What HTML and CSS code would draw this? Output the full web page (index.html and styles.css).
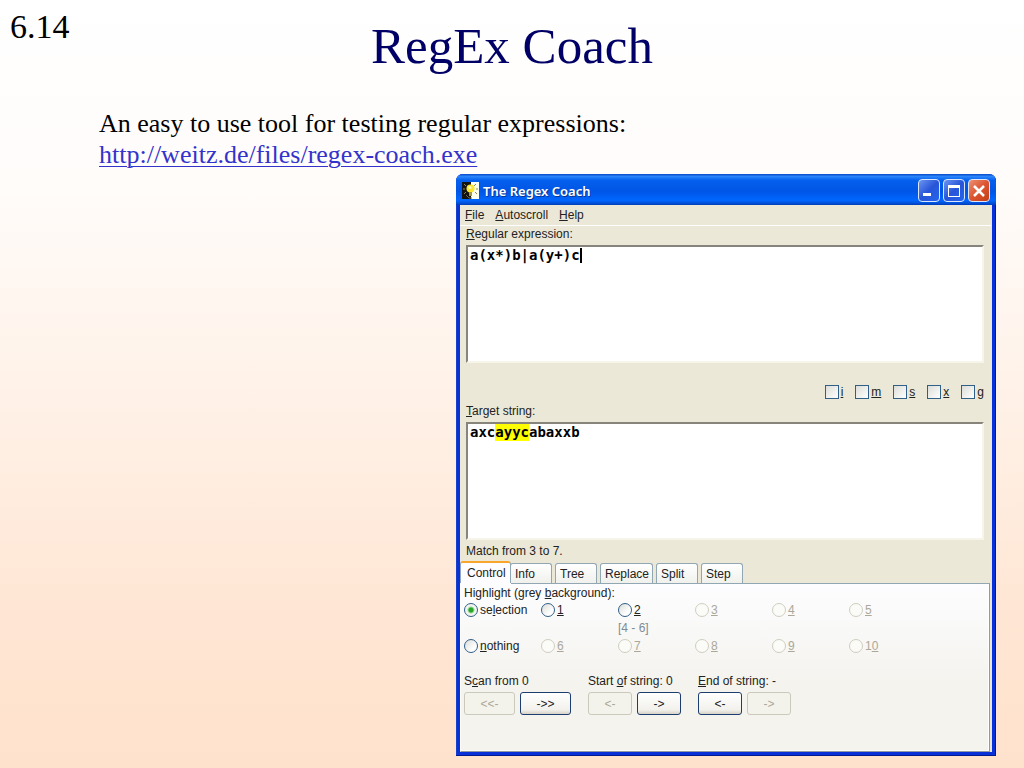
FILE: index.html
```html
<!DOCTYPE html>
<html lang="en">
<head>
<meta charset="utf-8">
<title>RegEx Coach</title>
<link rel="stylesheet" href="styles.css">
</head>
<body>
<main class="slide">
  <header class="slide-header">
    <span class="slide-number">6.14</span>
    <h1 class="slide-title">RegEx Coach</h1>
  </header>
  <div class="slide-text">
    <p>An easy to use tool for testing regular expressions:</p>
    <p><a href="http://weitz.de/files/regex-coach.exe">http://weitz.de/files/regex-coach.exe</a></p>
  </div>
  <section class="window" aria-label="The Regex Coach">
    <div class="titlebar">
      <svg class="app-icon" viewBox="0 0 17 17" aria-hidden="true">
        <rect width="9" height="17" fill="#141414"/><rect x="9" width="8" height="17" fill="#fffff0"/>
        <path d="M2 2l2 2M1 7h2M2 12l2-2M14 2l-2 2M16 7h-2M15 12l-2-2" stroke="#8c8a50" stroke-width="1"/>
        <circle cx="8.500" cy="6.500" r="4" fill="#ffe62e"/><circle cx="8" cy="5.500" r="1.500" fill="#fffbc0"/>
        <path d="M7 10h3v4H7z" fill="#a89848"/><path d="M4 13l3 3h3" stroke="#69694a" fill="none"/>
      </svg>
      <h2 class="window-title">The Regex Coach</h2>
      <button class="caption-button" aria-label="Minimize"><svg viewBox="0 0 20 21"><path d="M4 13h8v3H4z" fill="#fff"/></svg></button>
      <button class="caption-button" aria-label="Maximize"><svg viewBox="0 0 20 21"><path d="M4 5h12v12H4zM5 8v8h10V8z" fill="#fff" fill-rule="evenodd"/></svg></button>
      <button class="caption-button caption-close" aria-label="Close"><svg viewBox="0 0 20 21"><path d="M5 6l10 10M15 6L5 16" stroke="#fff" stroke-width="2.500"/></svg></button>
    </div>
    <div class="client">
      <nav class="menu">
        <button><u>F</u>ile</button><button><u>A</u>utoscroll</button><button><u>H</u>elp</button>
      </nav>
      <div class="editors">
        <label class="editor-label" for="regex"><u>R</u>egular expression:</label>
        <div class="editor">
          <div class="editor-layer"><span class="caret"></span></div>
          <textarea id="regex" spellcheck="false">a(x*)b|a(y+)c</textarea>
        </div>
        <div class="flags">
          <label><input type="checkbox"><u>i</u></label>
          <label><input type="checkbox"><u>m</u></label>
          <label><input type="checkbox"><u>s</u></label>
          <label><input type="checkbox"><u>x</u></label>
          <label><input type="checkbox"><u>g</u></label>
        </div>
        <label class="editor-label" for="target"><u>T</u>arget string:</label>
        <div class="editor">
          <div class="editor-layer"><span class="match"></span></div>
          <textarea id="target" spellcheck="false">axcayycabaxxb</textarea>
        </div>
        <p class="status">Match from 3 to 7.</p>
      </div>
      <div class="tabs" role="tablist">
        <button class="tab tab-active" role="tab" aria-selected="true">Control</button>
        <button class="tab" role="tab">Info</button>
        <button class="tab" role="tab">Tree</button>
        <button class="tab tab-wide" role="tab">Replace</button>
        <button class="tab" role="tab">Split</button>
        <button class="tab" role="tab">Step</button>
      </div>
      <div class="panel" role="tabpanel">
        <p class="panel-label">Highlight (grey <u>b</u>ackground):</p>
        <div class="choices">
          <label><input type="radio" name="highlight" checked><span>se<u>l</u>ection</span></label>
          <label><input type="radio" name="highlight"><u>1</u></label>
          <label><input type="radio" name="highlight"><u>2</u></label>
          <label><input type="radio" name="highlight" disabled><u>3</u></label>
          <label><input type="radio" name="highlight" disabled><u>4</u></label>
          <label><input type="radio" name="highlight" disabled><u>5</u></label>
          <span class="range">[4 - 6]</span>
          <label class="row-start"><input type="radio" name="highlight"><span><u>n</u>othing</span></label>
          <label><input type="radio" name="highlight" disabled><u>6</u></label>
          <label><input type="radio" name="highlight" disabled><u>7</u></label>
          <label><input type="radio" name="highlight" disabled><u>8</u></label>
          <label><input type="radio" name="highlight" disabled><u>9</u></label>
          <label><input type="radio" name="highlight" disabled><span>1<u>0</u></span></label>
        </div>
        <div class="steppers">
          <div class="stepper stepper-wide">
            <p>S<u>c</u>an from 0</p>
            <div class="step-buttons"><button disabled>&lt;&lt;-</button><button>-&gt;&gt;</button></div>
          </div>
          <div class="stepper">
            <p>Start <u>o</u>f string: 0</p>
            <div class="step-buttons"><button disabled>&lt;-</button><button>-&gt;</button></div>
          </div>
          <div class="stepper">
            <p><u>E</u>nd of string: -</p>
            <div class="step-buttons"><button>&lt;-</button><button disabled>-&gt;</button></div>
          </div>
        </div>
      </div>
    </div>
  </section>
</main>
</body>
</html>
```

FILE: styles.css
```css
* { box-sizing: border-box; }
html { min-height: 100%; background: linear-gradient(#ffffff, #fffcfa 24%, #ffe6d4 80%, #ffe2cc); }
body, p, h1, h2 { margin: 0; }
body { font-family: "Liberation Serif", serif; color: #000; }
.slide { padding-bottom: 12px; }
.slide-header {
  display: grid;
  grid-template-columns: 1fr auto 1fr;
  padding: 0 10px;
  height: 108px;
}
.slide-number { font-size: 34px; line-height: 54px; }
.slide-title { font-size: 51px; font-weight: 400; line-height: 92px; color: #000066; }
.slide-text { padding-left: 99px; font-size: 26px; line-height: 31px; height: 66px; }
.slide-text a { color: #3333cc; text-decoration-thickness: 1px; text-underline-offset: 3px; }

.window {
  margin: 0 28px 0 456px;
  padding: 0 4px 4px;
  border-radius: 7px 7px 0 0;
  background: #0831d9;
  box-shadow: inset -1px -1px #001a90, inset 1px 0 #1941c8;
  color: #222;
  font: 12px/18px "Liberation Sans", Arial, sans-serif;
}
.window button { font: inherit; color: inherit; }
.titlebar {
  display: flex;
  align-items: center;
  gap: 3px;
  height: 31px;
  margin: 0 -4px;
  padding: 2px 6px 0;
  border-radius: 7px 7px 0 0;
  background: linear-gradient(#0849c9, #2a85fb 8%, #0560ee 20%, #0055e5 55%, #0066ff 85%, #0050d8 94%, #003cb8);
  color: #fff;
}
.app-icon { width: 17px; height: 17px; }
.window-title {
  flex: 1;
  font: 600 13px/20px "Noto Sans", sans-serif;
  padding-left: 1px;
  text-shadow: 1px 1px #0a3590;
}
.window .caption-button {
  width: 22px;
  height: 23px;
  padding: 0;
  border: 1px solid #dbe6ff;
  border-radius: 4px;
  background: linear-gradient(135deg, #6c95f2, #2855d8 50%, #2465ee);
}
.caption-button svg { display: block; width: 20px; height: 21px; }
.window .caption-close { background: linear-gradient(135deg, #ec9174, #dc5430 50%, #c23e16); }

.client { background: #ebe8d8; border-right: 1px solid #dfe5ee; }
.menu {
  display: flex;
  gap: 11px;
  height: 21px;
  padding: 0 5px;
  border-bottom: 1px solid #fff;
}
.menu button { padding: 0; border: 0; background: none; }
.editors { padding: 0 7px 0 6px; }
.editor-label { display: block; height: 19px; line-height: 17px; }
.editor {
  display: grid;
  height: 118px;
  background: #fff;
  border: 2px solid;
  border-color: #87857b #f7f5e9 #f7f5e9 #87857b;
  font: 700 14px/17px "DejaVu Sans Mono", monospace;
}
.editor textarea, .editor-layer { grid-area: 1 / 1; padding: 0 2px; }
.editor textarea {
  z-index: 1;
  width: 100%;
  height: 100%;
  border: 0;
  outline: 0;
  resize: none;
  background: transparent;
  color: #000;
  font: inherit;
}
.editor-layer { display: flex; }
.match { width: 4ch; height: 17px; margin-left: 3ch; background: #ff0; }
.caret { width: 2px; height: 15px; margin: 1px 0 0 13ch; background: #000; }
.flags { display: flex; justify-content: flex-end; gap: 12px; height: 40px; padding-top: 20px; }
.flags label { display: flex; align-items: center; gap: 2px; height: 17px; }
.flags input {
  appearance: none;
  width: 14px;
  height: 14px;
  margin: 0;
  border: 1px solid #305f88;
  background: linear-gradient(135deg, #dcdcd7, #fff);
}
.status { height: 21px; line-height: 22px; }

.tabs { display: flex; align-items: flex-end; gap: 3px; height: 22px; }
.window .tab {
  width: 42px;
  height: 20px;
  padding: 0 4px;
  border: 1px solid #91a7b4;
  border-bottom: 0;
  border-radius: 3px 3px 0 0;
  background: linear-gradient(#fff, #f0f1ec);
  text-align: left;
  line-height: 20px;
}
.window .tab-wide { width: 53px; }
.window .tab-active {
  z-index: 1;
  width: 51px;
  height: 22px;
  margin-right: -4px;
  padding: 0 6px;
  border-top: 2px solid #f9a52c;
  background: #fdfdff;
  box-shadow: 0 1px #fdfdff;
}
.panel {
  min-height: 169px;
  padding: 0 3px;
  background: linear-gradient(#fdfdff, #f4f3ee 60%, #f4f3ee);
  border: 1px solid #919b9c;
  border-top-color: #91a7b4;
  border-left-color: #fff;
  box-shadow: inset -1px -1px #fff;
  margin-right: 1px;
}
.panel-label { height: 17px; line-height: 18px; }
.choices { display: grid; grid-template-columns: repeat(6, 77px); grid-auto-rows: 18px; }
.choices label { display: flex; align-items: center; gap: 2px; }
.choices input {
  appearance: none;
  width: 14px;
  height: 14px;
  margin: 0;
  border: 1px solid #305f88;
  border-radius: 50%;
  background: linear-gradient(135deg, #dcdcd7, #fff 70%);
}
.choices input:checked { background: radial-gradient(circle, #27a527 0 2px, #9bdc9b 3px, #f4f4f0 4px); }
.choices input:disabled { border-color: #d0cebf; background: #fbfbf8; }
.choices label:has(:disabled) { color: #aba899; }
.range { grid-column: 3; color: #7e8b96; }
.row-start { grid-column: 1; }
.steppers { display: flex; gap: 17px; padding-top: 17px; }
.stepper p { height: 20px; line-height: 19px; }
.step-buttons { display: flex; gap: 5px; }
.step-buttons button {
  width: 44px;
  height: 23px;
  padding: 0;
  border: 1px solid #1c3d6e;
  border-radius: 3px;
  background: linear-gradient(#fff, #f2f1ec 80%, #d8d3c8);
}
.stepper-wide button { width: 51px; }
.step-buttons button:disabled { border-color: #cbc9bc; background: #f4f3eb; color: #aba899; }
```
